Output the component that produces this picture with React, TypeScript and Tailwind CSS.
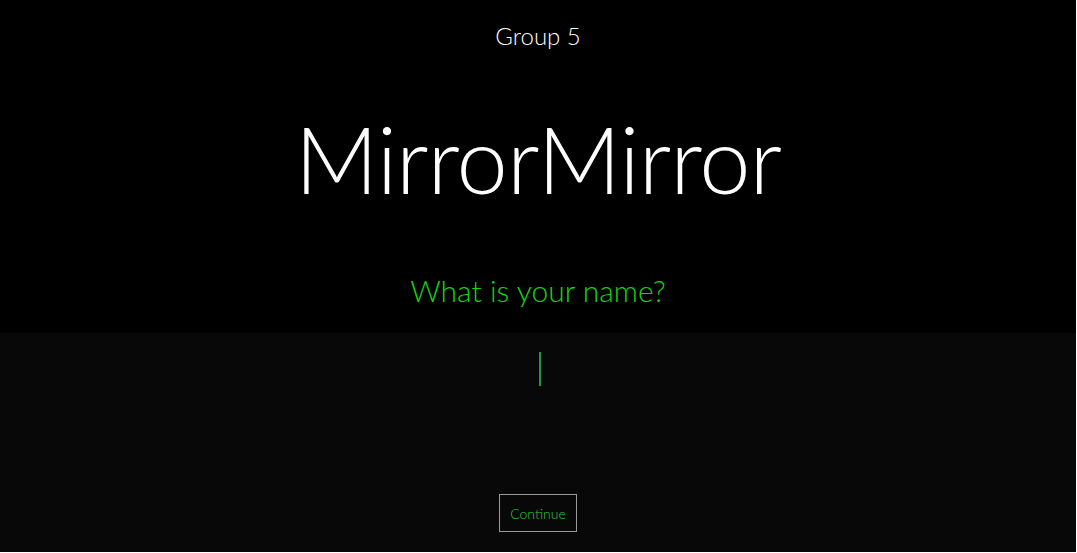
import React from "react";

export default function App() {
  return (
    <div className="w-[1077px] h-[553px] bg-white" style={{ fontFamily: "Lato, 'Noto Sans', sans-serif" }}>
      <div className="w-[1076px] h-[552px] bg-black flex flex-col">
        <div className="h-[333px] flex flex-col items-center">
          <div className="mt-[20px] text-white text-[24px] font-light leading-[32px]">Group 5</div>
          <div className="mt-[52px] text-white text-[92px] font-light leading-[110px] tracking-[-1px]">MirrorMirror</div>
          <div className="mt-[58px] text-[#12d612] text-[30px] font-light leading-[36px]">What is your name?</div>
        </div>
        <div className="flex-1 bg-[#080808] flex flex-col items-center">
          <div className="mt-[19px] ml-[4px] w-[2px] h-[34px] bg-[#1c9a48]" />
          <button className="mt-[108px] w-[78px] h-[38px] border border-[#9a9a9a] text-[#2dc83a] text-[14px] font-light">
            Continue
          </button>
        </div>
      </div>
    </div>
  );
}
